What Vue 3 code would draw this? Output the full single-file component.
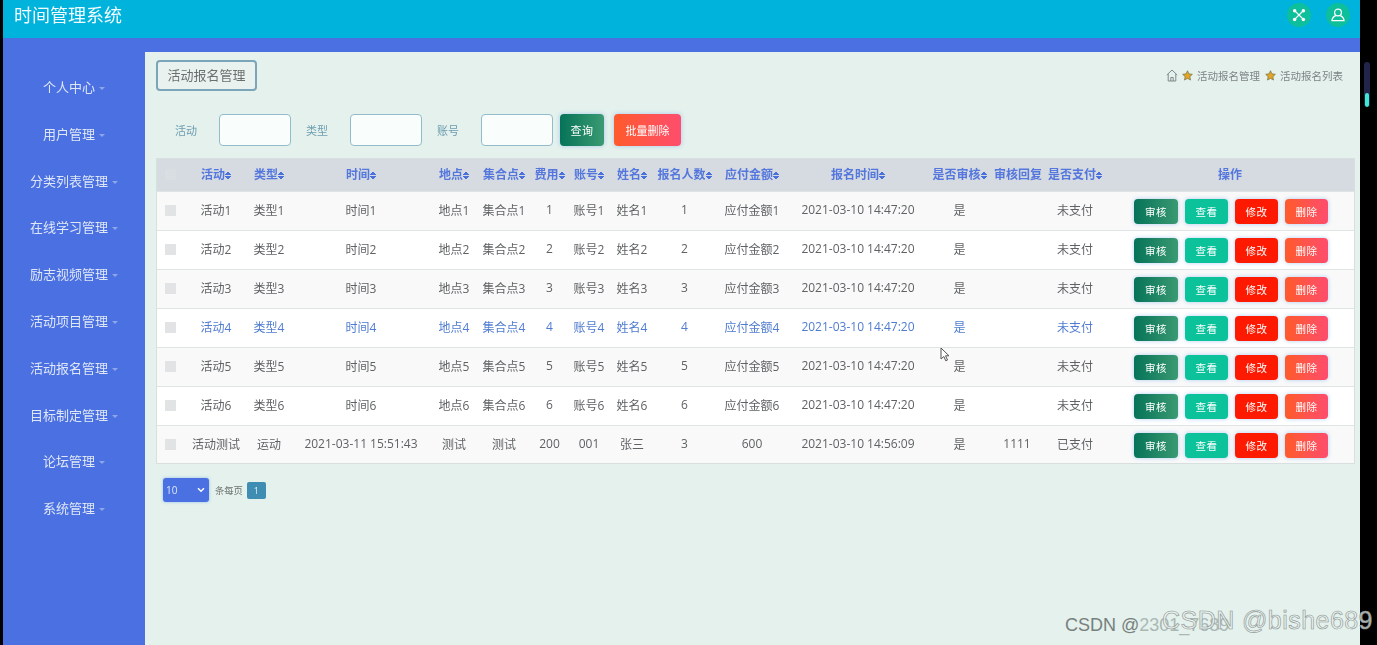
<script setup>
const menu = ['个人中心','用户管理','分类列表管理','在线学习管理','励志视频管理','活动项目管理','活动报名管理','目标制定管理','论坛管理','系统管理']
const cols = [
  { t:'活动', w:58 },{ t:'类型', w:48 },{ t:'时间', w:136 },{ t:'地点', w:50 },{ t:'集合点', w:50 },
  { t:'费用', w:41 },{ t:'账号', w:38 },{ t:'姓名', w:48 },{ t:'报名人数', w:57 },{ t:'应付金额', w:78 },
  { t:'报名时间', w:134 },{ t:'是否审核', w:69 },{ t:'审核回复', w:46, plain:true },{ t:'是否支付', w:70 }
]
const rows = [1,2,3,4,5,6].map(n => [`活动${n}`,`类型${n}`,`时间${n}`,`地点${n}`,`集合点${n}`,`${n}`,`账号${n}`,`姓名${n}`,`${n}`,`应付金额${n}`,'2021-03-10 14:47:20','是','','未支付'])
rows.push(['活动测试','运动','2021-03-11 15:51:43','测试','测试','200','001','张三','3','600','2021-03-10 14:56:09','是','1111','已支付'])
</script>

<template>
  <div class="page">
    <div class="app">
      <header class="top">
        <div class="title">时间管理系统</div>
        <div class="top-icons">
          <span class="round">
            <svg width="14" height="14" viewBox="0 0 16 16" fill="none" stroke="#fff" stroke-width="1.300">
              <path d="M4 4l8 8M12 4l-8 8"/>
              <circle cx="3" cy="3" r="2" fill="#fff" stroke="none"/><circle cx="13" cy="3" r="2" fill="#fff" stroke="none"/>
              <circle cx="3" cy="13" r="2" fill="#fff" stroke="none"/><circle cx="13" cy="13" r="2" fill="#fff" stroke="none"/>
            </svg>
          </span>
          <span class="round">
            <svg width="16" height="16" viewBox="0 0 16 16" fill="none" stroke="#fff" stroke-width="1.300">
              <circle cx="8" cy="5.500" r="3.400"/><path d="M5.600 8.600C3.600 9.600 2 11 2 13.600h12c0-2.600-1.600-4-3.600-5"/>
            </svg>
          </span>
        </div>
      </header>
      <div class="body">
        <aside class="side">
          <div v-for="m in menu" :key="m" class="side-item">{{ m }}<i class="caret"></i></div>
        </aside>
        <main class="main">
          <div class="crumb-row">
            <div class="tag">活动报名管理</div>
            <div class="crumbs">
              <svg width="12" height="13" viewBox="0 0 12 13" fill="none" stroke="#7d8a8a" stroke-width="1"><path d="M.8 6L6 1l5.200 5M2.200 5v7h7.600V5M4.800 12V8.500h2.400V12"/></svg>
              <svg class="star" width="11" height="11" viewBox="0 0 12 12"><path d="M6 .8l1.600 3.400 3.700.5-2.700 2.600.7 3.700L6 9.200l-3.300 1.800.7-3.700L.7 4.700l3.700-.5z" fill="#e0a526" stroke="#6d6a4a" stroke-width=".7"/></svg>
              <span>活动报名管理</span>
              <svg class="star" width="11" height="11" viewBox="0 0 12 12"><path d="M6 .8l1.600 3.400 3.700.5-2.700 2.600.7 3.700L6 9.200l-3.300 1.800.7-3.700L.7 4.700l3.700-.5z" fill="#e0a526" stroke="#6d6a4a" stroke-width=".7"/></svg>
              <span>活动报名列表</span>
            </div>
          </div>
          <div class="search">
            <label class="lb first">活动</label><input class="ipt" />
            <label class="lb">类型</label><input class="ipt" />
            <label class="lb">账号</label><input class="ipt" />
            <button class="btn green q">查询</button>
            <button class="btn coral del">批量删除</button>
          </div>
          <table class="grid">
            <colgroup>
              <col style="width:31px" />
              <col v-for="c in cols" :key="c.t" :style="{ width: c.w + 'px' }" />
              <col />
            </colgroup>
            <thead>
              <tr>
                <th><span class="chk head"></span></th>
                <th v-for="c in cols" :key="c.t">{{ c.t }}<span v-if="!c.plain" class="sort"></span></th>
                <th class="ops-h">操作</th>
              </tr>
            </thead>
            <tbody>
              <tr v-for="(r, i) in rows" :key="i" :class="{ alt: i % 2 === 0, hot: i === 3 }">
                <td><span class="chk"></span></td>
                <td v-for="(v, j) in r" :key="j">{{ v }}</td>
                <td>
                  <div class="ops">
                    <button class="btn sm green">审核</button>
                    <button class="btn sm teal">查看</button>
                    <button class="btn sm red">修改</button>
                    <button class="btn sm coral">删除</button>
                  </div>
                </td>
              </tr>
            </tbody>
          </table>
          <div class="pager">
            <div class="sel">10<svg width="8" height="6" viewBox="0 0 8 6" fill="none" stroke="#fff" stroke-width="1.500"><path d="M1 1.200l3 3 3-3"/></svg></div>
            <span class="per">条每页</span>
            <span class="pg">1</span>
          </div>
        </main>
      </div>
    </div>
    <div class="rail"><span class="thumb"></span></div>
    <svg class="cursor" width="11" height="15" viewBox="0 0 11 15"><path d="M1 1v11l2.800-2.500 2 4.300 1.700-.8-2-4.200H9z" fill="#fff" stroke="#555" stroke-width="1"/></svg>
    <div class="wm wm-a">CSDN @<span class="faint">2301_7689</span></div>
    <div class="wm wm-b">CSDN @bishe689</div>
  </div>
</template>

<style>
html, body { margin: 0; background: #000; overflow: hidden; }
</style>

<style scoped>
.page {
  position: relative;
  width: 1377px;
  height: 645px;
  overflow: hidden;
  background: #000;
  font-family: "Open Sans", "Noto Sans CJK SC", sans-serif;
  display: flex;
}
.app {
  margin-left: 3px;
  width: 1357px;
  height: 645px;
  display: flex;
  flex-direction: column;
  filter: blur(0.55px);
}
.top {
  height: 38px;
  flex: none;
  background: #00b3dc;
  display: flex;
  align-items: flex-start;
  justify-content: space-between;
  box-sizing: border-box;
  padding: 2px 10px 0 11px;
}
.title { color: #f2fbfd; font-size: 18px; line-height: 26px; }
.top-icons { display: flex; gap: 15px; margin-top: 1px; }
.round {
  width: 24px; height: 24px; border-radius: 50%;
  background: #0dbf9b;
  display: flex; align-items: center; justify-content: center;
}
.body {
  flex: 1;
  display: flex;
  background: #4a70e2;
  padding-top: 14px;
  min-height: 0;
}
.side {
  width: 142px;
  flex: none;
  box-sizing: border-box;
  padding-top: 12px;
}
.side-item {
  height: 46.800px;
  line-height: 46px;
  text-align: center;
  color: #dfe7f7;
  font-size: 13px;
}
.caret {
  display: inline-block;
  margin-left: 4px;
  vertical-align: middle;
  border: 3px solid transparent;
  border-top: 3px solid #8ea5e8;
  border-bottom: 0;
}
.main {
  flex: 1;
  background: #e4f1ec;
  box-sizing: border-box;
  padding: 8px 5px 0 11px;
  min-width: 0;
}
.crumb-row { display: flex; justify-content: space-between; align-items: center; padding-right: 12px; height: 31px; }
.tag {
  width: 101px; height: 31px; box-sizing: border-box;
  border: 2px solid #7ba5b9; border-radius: 4px;
  color: #6b6f70; font-size: 13px; line-height: 27px; text-align: center;
  background: #e9f2ee;
}
.crumbs { display: flex; align-items: center; color: #7d8585; font-size: 10.500px; }
.crumbs span { margin-left: 4px; }
.star { margin-left: 4px; }
.crumbs span + .star { margin-left: 5px; }
.search {
  display: flex; align-items: center;
  height: 32px; margin-top: 23px;
}
.lb { width: 59px; padding-left: 15px; box-sizing: border-box; color: #6f9db0; font-size: 11px; }
.lb.first { width: 63px; padding-left: 19px; }
.ipt {
  width: 72px; height: 32px; box-sizing: border-box;
  border: 1.500px solid #93bccb; border-radius: 4px;
  background: #f9fdfb; outline: none; padding: 0;
}
.btn {
  border: 0; padding: 0; color: #fff; font-family: inherit; border-radius: 4px;
  box-shadow: 0 0 4px rgba(90, 150, 240, .45);
}
.q { width: 44px; height: 32px; font-size: 11px; letter-spacing: .5px; margin-left: 7px; }
.del { width: 67px; height: 32px; font-size: 11px; margin-left: 10px; }
.green { background: linear-gradient(90deg, #067358, #3a9a72); }
.teal { background: #0bc29b; }
.red { background: #fe1a00; }
.coral { background: linear-gradient(90deg, #ff5a2c, #ff4d6d); }
.grid {
  width: 1199px;
  margin-top: 12px;
  table-layout: fixed;
  border-collapse: collapse;
  font-size: 12px;
  color: #5f6264;
  outline: 1px solid #d8dfdf;
  outline-offset: -1px;
}
.grid th {
  height: 33px; padding: 0 0 1px; box-sizing: border-box; background: #d5dbe0;
  color: #5577dd; font-size: 12px; font-weight: 700; white-space: nowrap;
}
.grid td {
  height: 39px; box-sizing: border-box; padding: 0 0 2px; text-align: center; background: #fff;
  border-top: 1px solid #dfe4e4; white-space: nowrap;
}
.grid tr.alt td { background: #f9f9f9; }
.grid tr.hot td { color: #4f7cd0; }
.grid .ops-h { padding-right: 5px; }
.sort {
  display: inline-block; width: 6px; height: 9px; vertical-align: -1px;
  background:
    linear-gradient(135deg, transparent 50%, #4a70dc 50%) 0 0/3px 4px no-repeat,
    linear-gradient(225deg, transparent 50%, #4a70dc 50%) 3px 0/3px 4px no-repeat,
    linear-gradient(45deg, transparent 50%, #4a70dc 50%) 0 5px/3px 4px no-repeat,
    linear-gradient(315deg, transparent 50%, #4a70dc 50%) 3px 5px/3px 4px no-repeat;
}
.chk { display: block; width: 11px; height: 11px; margin: 1px 0 0 9px; background: #e1e3e5; }
.chk.head { background: #d9dee3; }
.ops { display: flex; padding-left: 24px; gap: 7px; align-items: center; padding-top: 4px; }
.sm { width: 43px; height: 25px; font-size: 10.500px; letter-spacing: .4px; }
.sm:first-child { width: 44px; }
.pager { display: flex; align-items: center; margin: 14px 0 0 7px; }
.sel {
  width: 46px; height: 24px; box-sizing: border-box; background: #4a70e2; border-radius: 3px;
  color: #dfe7f7; font-size: 10px; display: flex; align-items: center; justify-content: space-between;
  padding: 0 4px 0 3px; box-shadow: 0 0 3px rgba(90, 150, 240, .6);
}
.per { margin-left: 6px; color: #6d7272; font-size: 9.300px; }
.pg {
  margin-left: 4px; width: 19px; height: 17px; border-radius: 2px; background: #3f8db2; color: #dff0f6;
  font-size: 9px; line-height: 17px; text-align: center;
}
.rail {
  position: absolute; left: 1364px; top: 62px; width: 6px; height: 45px; border-radius: 3px;
  background: #23244a; overflow: hidden;
}
.thumb { position: absolute; left: 1px; right: 1px; bottom: 0; height: 14px; background: #3fe8d0; border-radius: 2px; }
.cursor { position: absolute; left: 940px; top: 347px; }
.wm { position: absolute; white-space: nowrap; font-family: "Liberation Sans", sans-serif; }
.wm-a { left: 1065px; top: 615px; font-size: 18px; color: #77807e; }
.faint { color: #aab8b4; }
.wm-b {
  left: 1162px; top: 606px; font-size: 25px; letter-spacing: .45px;
  color: rgba(232, 240, 238, .75);
  -webkit-text-stroke: .6px #8b9391;
}
</style>
